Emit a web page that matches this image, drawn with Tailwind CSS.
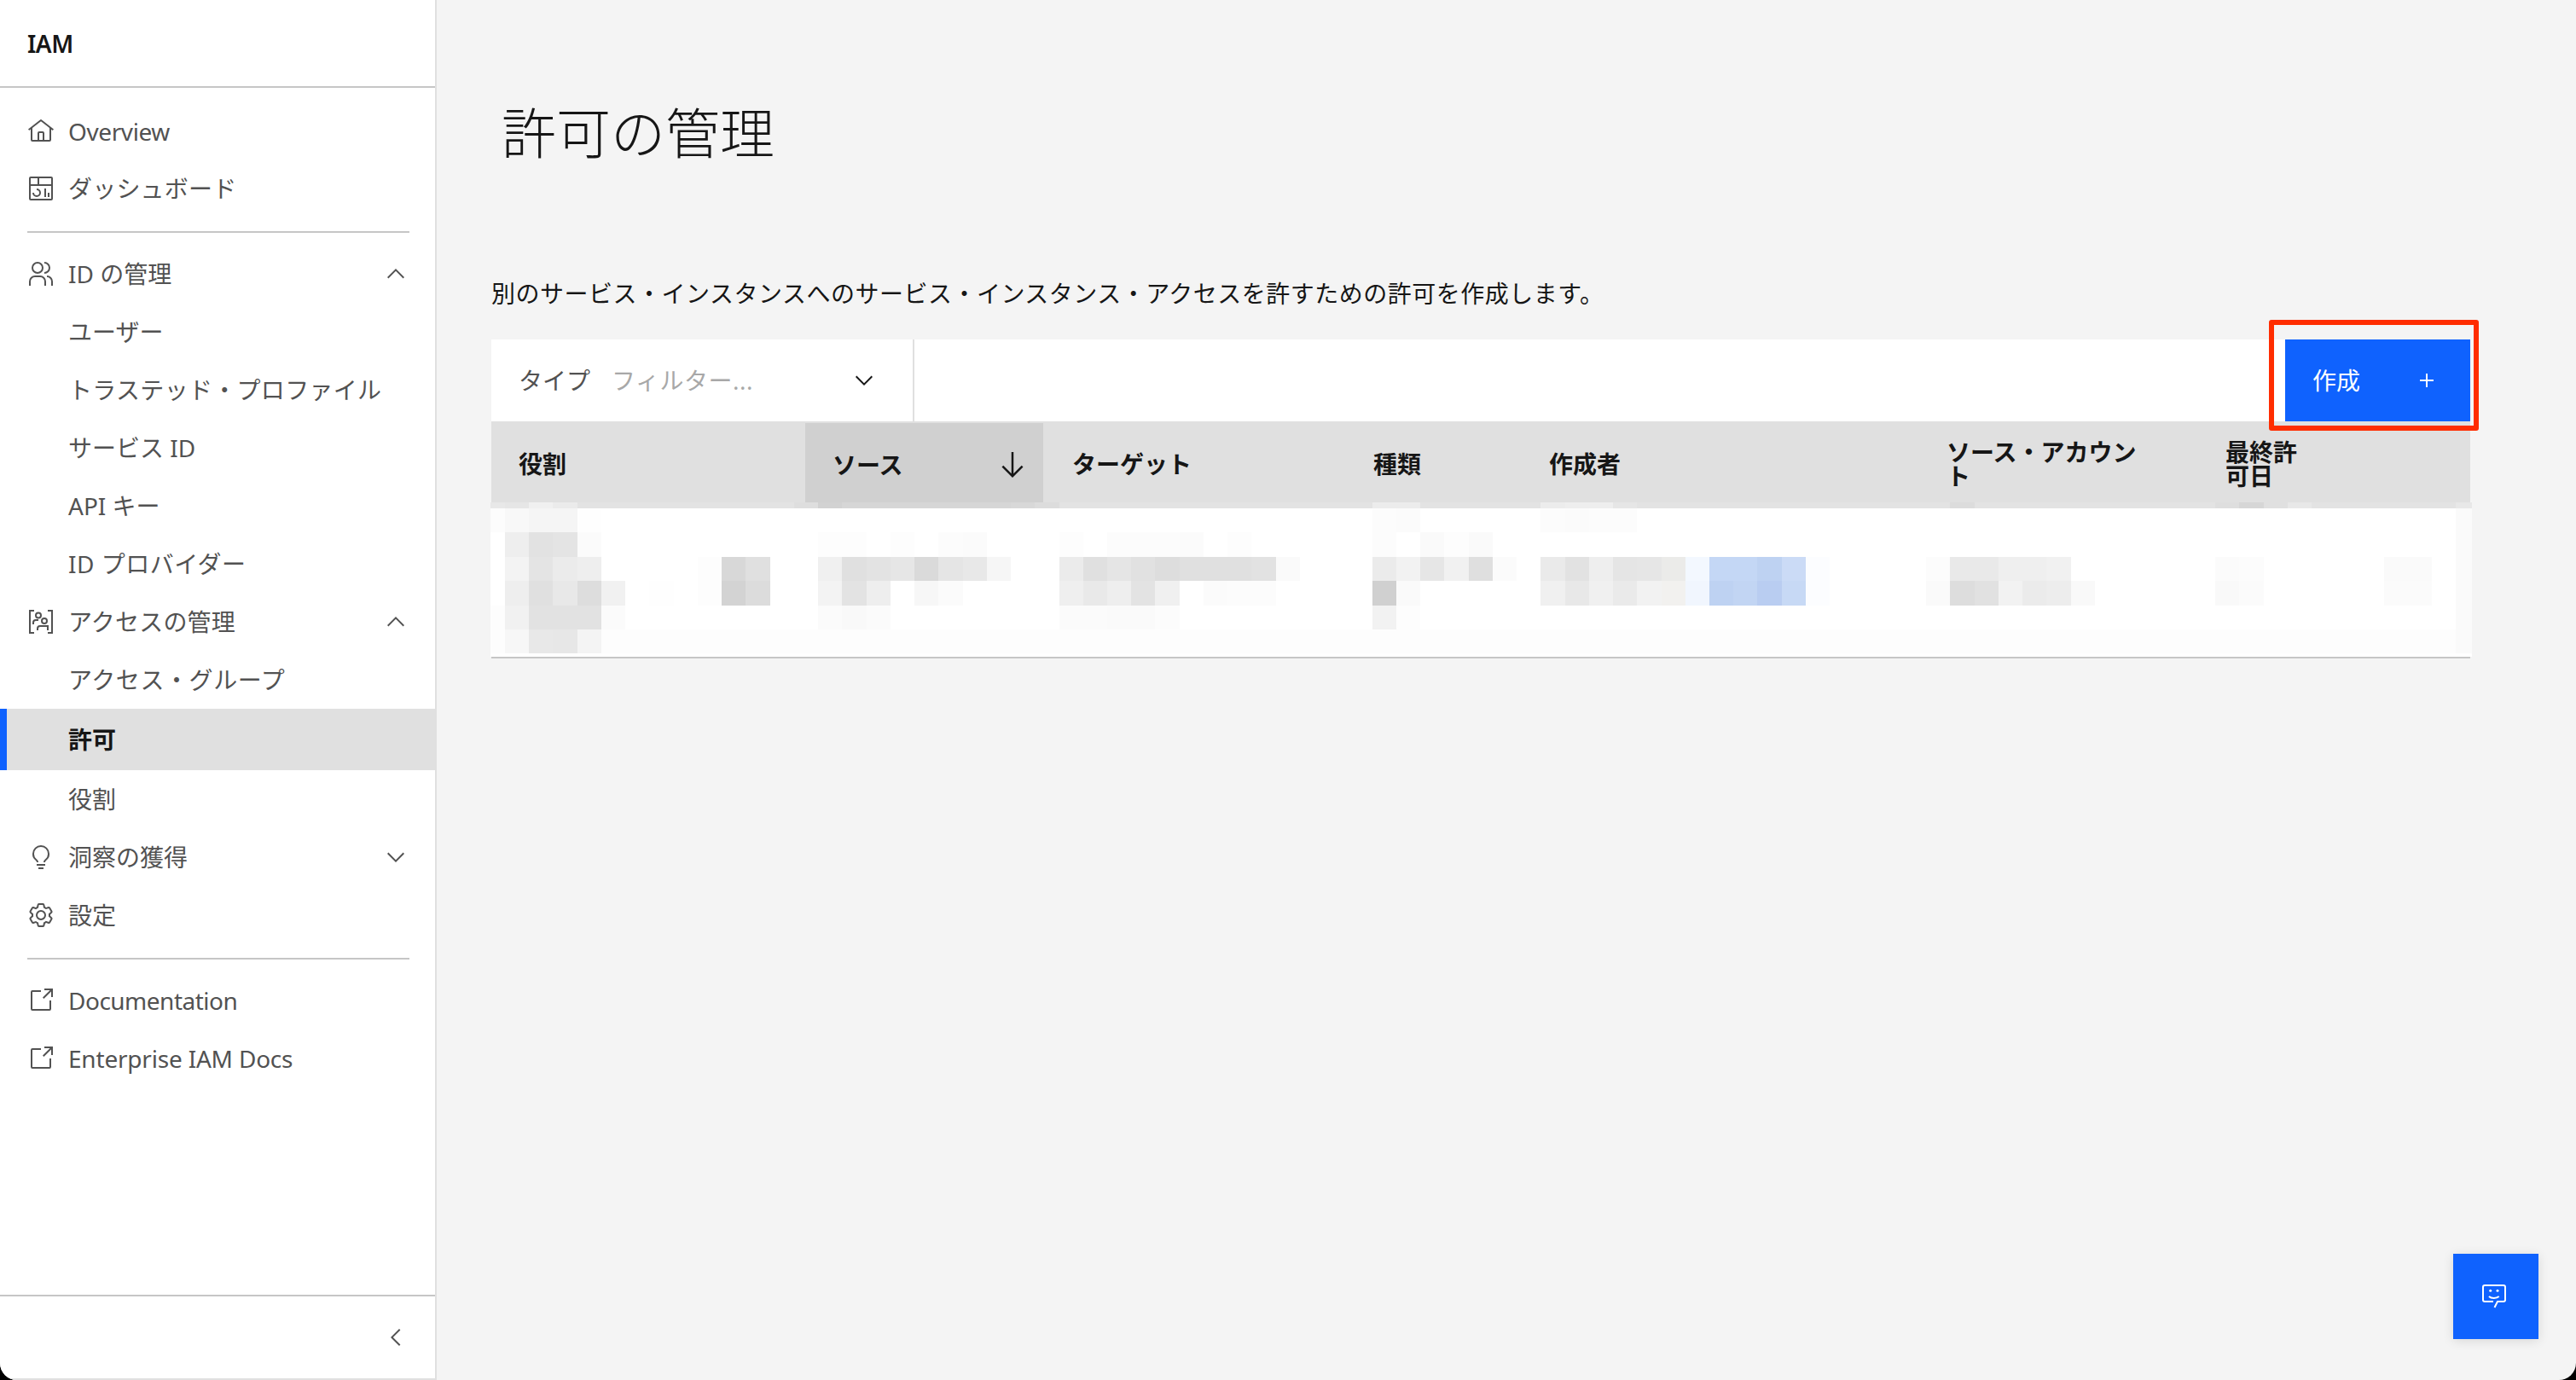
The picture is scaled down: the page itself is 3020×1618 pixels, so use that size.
<!DOCTYPE html>
<html lang="ja">
<head>
  <meta charset="UTF-8">
  <title>許可の管理 - IAM</title>
  <script src="https://cdn.jsdelivr.net/npm/@tailwindcss/browser@4"></script>
</head>
<body class="bg-black font-['Noto_Sans','Noto_Sans_CJK_JP',sans-serif] text-[28px] text-[#161616]">
  <div class="relative flex h-[1618px] w-[3020px] overflow-hidden rounded-b-[20px] bg-[#f4f4f4]">

    <!-- Sidebar -->
    <aside class="flex h-full w-[512px] shrink-0 flex-col border-r-2 border-b-2 border-[#e0e0e0] bg-white text-[#525252]">
      <div class="flex h-[103px] shrink-0 items-center border-b-2 border-[#c6c6c6] pl-[32px] font-semibold tracking-[-0.5px] text-[#161616]">IAM</div>
      <nav class="flex-1 pt-[17px]">
        <a class="flex h-[68px] items-center gap-[16px] pl-[32px] tracking-[-0.4px]">
          <svg class="size-[32px] fill-[#525252]" viewBox="0 0 32 32"><path d="M16.6123,2.2138a1.01,1.01,0,0,0-1.2427,0L1,13.4194l1.2427,1.5717L4,13.6209V26a2.0041,2.0041,0,0,0,2,2H26a2.0037,2.0037,0,0,0,2-2V13.63L29.7573,15,31,13.4282ZM18,26H14V18h4Zm2,0V18a2.0023,2.0023,0,0,0-2-2H14a2.002,2.002,0,0,0-2,2v8H6V12.0615l10-7.79,10,7.8005V26Z"/></svg>
          Overview
        </a>
        <a class="flex h-[66px] items-center gap-[16px] pl-[32px] tracking-[0.2px]">
          <svg class="size-[32px] fill-[#525252]" viewBox="0 0 32 32"><path d="M24 21h2v5h-2zM20 16h2v10h-2zM11 26a5.006 5.006 0 01-5-5H8a3 3 0 103-3V16a5 5 0 010 10z"/><path d="M28,2H4A2.002,2.002,0,0,0,2,4V28a2.0023,2.0023,0,0,0,2,2H28a2.0027,2.0027,0,0,0,2-2V4A2.0023,2.0023,0,0,0,28,2Zm0,9H14V4H28ZM12,4v7H4V4ZM4,28V13H28.0007l.0013,15Z"/></svg>
          ダッシュボード
        </a>
        <div class="mr-[30px] ml-[32px] mt-[17px] mb-[14px] h-[2px] bg-[#c6c6c6]"></div>
        <a class="flex h-[68px] items-center gap-[16px] pl-[32px] pr-[30px]">
          <svg class="size-[32px] fill-[#525252]" viewBox="0 0 32 32"><path d="M30,30H28V25a5.0057,5.0057,0,0,0-5-5V18a7.0078,7.0078,0,0,1,7,7Z"/><path d="M22,30H20V25a5.0059,5.0059,0,0,0-5-5H9a5.0059,5.0059,0,0,0-5,5v5H2V25a7.0082,7.0082,0,0,1,7-7h6a7.0082,7.0082,0,0,1,7,7Z"/><path d="M20,2V4a5,5,0,0,1,0,10v2A7,7,0,0,0,20,2Z"/><path d="M12,4A5,5,0,1,1,7,9a5,5,0,0,1,5-5m0-2a7,7,0,1,0,7,7A7,7,0,0,0,12,2Z"/></svg>
          <span class="flex-1">ID の管理</span>
          <svg class="size-[32px] fill-[#525252]" viewBox="0 0 32 32"><path d="M16 10L26 20 24.6 21.4 16 12.8 7.4 21.4 6 20z"/></svg>
        </a>
        <a class="flex h-[68px] items-center pl-[80px]">ユーザー</a>
        <a class="flex h-[68px] items-center pl-[80px] tracking-[0.3px]">トラステッド・プロファイル</a>
        <a class="flex h-[68px] items-center pl-[80px]">サービス ID</a>
        <a class="flex h-[68px] items-center pl-[80px]">API キー</a>
        <a class="flex h-[68px] items-center pl-[80px] tracking-[0.5px]">ID プロバイダー</a>
        <a class="flex h-[68px] items-center gap-[16px] pl-[32px] pr-[30px] tracking-[0.2px]">
          <svg class="size-[32px]" viewBox="0 0 32 32" fill="none" stroke="#525252" stroke-width="2"><path d="M8 3H3v26h5M24 3h5v26h-5"/><circle cx="13" cy="8.500" r="3"/><path d="M7 19v-2a3 3 0 013-3h3"/><circle cx="20" cy="15" r="3"/><path d="M12 26v-2a3 3 0 013-3h9v5"/></svg>
          <span class="flex-1">アクセスの管理</span>
          <svg class="size-[32px] fill-[#525252]" viewBox="0 0 32 32"><path d="M16 10L26 20 24.6 21.4 16 12.8 7.4 21.4 6 20z"/></svg>
        </a>
        <a class="flex h-[68px] items-center pl-[80px] tracking-[0.6px]">アクセス・グループ</a>
        <a class="flex h-[72px] items-center border-l-[8px] border-[#0f62fe] bg-[#e0e0e0] pl-[72px] font-semibold text-[#161616] -mr-[2px]">許可</a>
        <a class="flex h-[68px] items-center pl-[80px]">役割</a>
        <a class="flex h-[68px] items-center gap-[16px] pl-[32px] pr-[30px]">
          <svg class="size-[32px] fill-[#525252]" viewBox="0 0 32 32"><path d="M11 24H21V26H11zM13 28H19V30H13zM16 2A10 10 0 006 12a9.19 9.19 0 003.46 7.62c1 .93 1.54 1.46 1.54 2.38h2c0-1.84-1.11-2.87-2.19-3.86A7.2 7.2 0 018 12a8 8 0 0116 0 7.2 7.2 0 01-2.82 6.14c-1.07 1-2.18 2-2.18 3.86h2c0-.92.53-1.45 1.54-2.39A9.18 9.18 0 0026 12 10 10 0 0016 2z"/></svg>
          <span class="flex-1">洞察の獲得</span>
          <svg class="size-[32px] fill-[#525252]" viewBox="0 0 32 32"><path d="M16 22L6 12 7.4 10.6 16 19.2 24.6 10.6 26 12z"/></svg>
        </a>
        <a class="flex h-[68px] items-center gap-[16px] pl-[32px]">
          <svg class="size-[32px] fill-[#525252]" viewBox="0 0 32 32"><path d="M27,16.76c0-.25,0-.5,0-.76s0-.51,0-.77l1.92-1.68A2,2,0,0,0,29.3,11L26.94,7a2,2,0,0,0-1.73-1,2,2,0,0,0-.64.1l-2.43.82a11.35,11.35,0,0,0-1.31-.75l-.51-2.52a2,2,0,0,0-2-1.61H13.64a2,2,0,0,0-2,1.61l-.51,2.52a11.48,11.48,0,0,0-1.32.75L7.43,6.06A2,2,0,0,0,6.79,6,2,2,0,0,0,5.06,7L2.7,11a2,2,0,0,0,.41,2.51L5,15.24c0,.25,0,.5,0,.76s0,.51,0,.77L3.11,18.45A2,2,0,0,0,2.7,21L5.06,25a2,2,0,0,0,1.73,1,2,2,0,0,0,.64-.1l2.43-.82a11.35,11.35,0,0,0,1.31.75l.51,2.52a2,2,0,0,0,2,1.61h4.72a2,2,0,0,0,2-1.61l.51-2.52a11.48,11.48,0,0,0,1.32-.75l2.42.82a2,2,0,0,0,.64.1,2,2,0,0,0,1.73-1L29.3,21a2,2,0,0,0-.41-2.51ZM25.21,24l-3.43-1.16a8.86,8.86,0,0,1-2.71,1.57L18.36,28H13.64l-.71-3.55a9.36,9.36,0,0,1-2.7-1.57L6.79,24,4.43,20l2.72-2.4a8.9,8.9,0,0,1,0-3.13L4.43,12,6.79,8l3.43,1.16a8.86,8.86,0,0,1,2.71-1.57L13.64,4h4.72l.71,3.55a9.36,9.36,0,0,1,2.7,1.57L25.21,8,27.57,12l-2.72,2.4a8.9,8.9,0,0,1,0,3.13L27.57,20Z"/><path d="M16,22a6,6,0,1,1,6-6A5.94,5.94,0,0,1,16,22Zm0-10a3.91,3.91,0,0,0-4,4,3.91,3.91,0,0,0,4,4,3.91,3.91,0,0,0,4-4A3.91,3.91,0,0,0,16,12Z"/></svg>
          設定
        </a>
        <div class="mr-[30px] ml-[32px] mt-[16px] mb-[14px] h-[2px] bg-[#c6c6c6]"></div>
        <a class="flex h-[68px] items-center gap-[16px] pl-[32px] tracking-[-0.5px]">
          <svg class="size-[32px] fill-[#525252]" viewBox="0 0 32 32"><path d="M26,28H6a2.0027,2.0027,0,0,1-2-2V6A2.0027,2.0027,0,0,1,6,4H16V6H6V26H26V16h2V26A2.0027,2.0027,0,0,1,26,28Z"/><path d="M20 2 20 4 26.586 4 18 12.586 19.414 14 28 5.414 28 12 30 12 30 2 20 2z"/></svg>
          Documentation
        </a>
        <a class="flex h-[68px] items-center gap-[16px] pl-[32px] tracking-[-0.2px]">
          <svg class="size-[32px] fill-[#525252]" viewBox="0 0 32 32"><path d="M26,28H6a2.0027,2.0027,0,0,1-2-2V6A2.0027,2.0027,0,0,1,6,4H16V6H6V26H26V16h2V26A2.0027,2.0027,0,0,1,26,28Z"/><path d="M20 2 20 4 26.586 4 18 12.586 19.414 14 28 5.414 28 12 30 12 30 2 20 2z"/></svg>
          Enterprise IAM Docs
        </a>
      </nav>
      <div class="flex h-[98px] shrink-0 items-center justify-end border-t-2 border-[#c6c6c6] pr-[30px]">
        <svg class="size-[32px] fill-[#525252]" viewBox="0 0 32 32"><path d="M10 16L20 6 21.4 7.4 12.8 16 21.4 24.6 20 26z"/></svg>
      </div>
    </aside>

    <!-- Main -->
    <main class="w-[2320px] ml-[64px]">
      <h1 class="mt-[116px] ml-[12px] h-[80px] text-[64px] leading-[80px] font-light">許可の管理</h1>
      <p class="mt-[128px] h-[40px] leading-[40px] tracking-[0.5px]">別のサービス・インスタンスへのサービス・インスタンス・アクセスを許すための許可を作成します。</p>

      <div class="mt-[34px] flex h-[96px] justify-between bg-white">
        <div class="flex w-[496px] items-center border-r-2 border-[#e0e0e0] pl-[32px] pr-[41px]">
          <span class="w-[109px] text-[#525252]">タイプ</span>
          <span class="flex-1 tracking-[0.5px] text-[#a8a8a8]">フィルター...</span>
          <svg class="size-[32px] fill-[#161616]" viewBox="0 0 32 32"><path d="M16 22L6 12 7.4 10.6 16 19.2 24.6 10.6 26 12z"/></svg>
        </div>
        <button class="flex w-[217px] items-center justify-between bg-[#0f62fe] pl-[32px] pr-[35px] text-white">
          作成
          <svg class="size-[32px] fill-white" viewBox="0 0 32 32"><path d="M17 15L17 8 15 8 15 15 8 15 8 17 15 17 15 24 17 24 17 17 24 17 24 15 17 15z"/></svg>
        </button>
      </div>

      <div class="flex h-[95px] items-center bg-[#e0e0e0] pt-[4px] font-semibold leading-[28px]">
        <div class="w-[368px] pl-[32px]">役割</div>
        <div class="flex h-[93px] w-[279px] items-center justify-between self-end bg-[#d0d0d0] pt-[4px] pl-[32px] pr-[16px]">
          ソース
          <svg class="size-[40px] fill-[#161616]" viewBox="0 0 32 32"><path d="M24.59 16.59L17 24.17 17 4 15 4 15 24.17 7.41 16.59 6 18 16 28 26 18 24.59 16.59z"/></svg>
        </div>
        <div class="w-[355px] pl-[34px]">ターゲット</div>
        <div class="w-[208px] pl-[32px]">種類</div>
        <div class="w-[464px] pl-[30px]">作成者</div>
        <div class="w-[327px] pl-[32px]"><span class="block w-[230px] break-all">ソース・アカウント</span></div>
        <div class="w-[319px] pl-[32px]"><span class="block w-[90px]">最終許可日</span></div>
      </div>

      <svg id="mosaic" class="-ml-px block bg-white" width="2323" height="181" viewBox="0 0 2323 181" shape-rendering="crispEdges"></svg>
      <div class="h-[2px] bg-[#c6c6c6]"></div>
    </main>

    <!-- Red highlight round the create button -->
    <div class="absolute top-[375px] left-[2660px] h-[130px] w-[246px] rounded-[3px] border-[6px] border-[#ff2d00]"></div>

    <!-- Feedback button -->
    <button class="absolute top-[1470px] left-[2876px] flex size-[100px] items-center justify-center bg-[#0f62fe] shadow-[0_2px_12px_rgba(0,0,0,0.12)]">
      <svg class="size-[32px]" viewBox="0 0 32 32" fill="none" stroke="#fff" stroke-width="2"><path d="M13 22H3a2 2 0 01-2-2V5a2 2 0 012-2h22a2 2 0 012 2v15a2 2 0 01-2 2h-7l-3.500 7"/><circle cx="9.700" cy="9.300" r="1.500" fill="#fff" stroke="none"/><circle cx="18" cy="9.300" r="1.500" fill="#fff" stroke="none"/><path d="M8 16c2.500 2.500 9 2.500 11.700 0"/></svg>
    </button>
  </div>

  <script>
    // redacted table row: blurred blocks on a 28.24px grid, [y, h, {column: grey or colour}]
    var rows = [
      [0, 7, {'-1':'e8e8e8',0:'e6e6e6',1:'f0f0f0',2:'ebebeb',12:'dedede',13:'d2d2d2',14:'d6d6d6',15:'d6d6d6',16:'d6d6d6',17:'d6d6d6',18:'d6d6d6',19:'d6d6d6',20:'d6d6d6',21:'d8d8d8',22:'dcdcdc',36:'ececec',37:'ececec',43:'ececec',44:'eeeeee',45:'eeeeee',46:'e6e6e6',60:'dcdcdc',71:'dedede',72:'d6d6d6',73:'e0e0e0',74:'e8e8e8'}],
      [7, 28, {'-1':'fcfcfc',0:'f8f8f8',1:'f5f5f5',2:'f5f5f5',3:'fefefe',36:'fcfcfc',37:'fbfbfb',43:'fcfcfc',44:'fbfbfb',45:'fcfcfc',46:'fcfcfc'}],
      [35, 29, {0:'eeeeee',1:'e2e2e2',2:'e4e4e4',3:'fbfbfb',13:'fdfdfd',14:'fdfdfd',16:'fdfdfd',18:'fcfcfc',19:'fbfbfb',23:'fdfdfd',25:'fcfcfc',26:'fcfcfc',27:'fcfcfc',28:'fbfbfb',30:'fdfdfd',36:'fcfcfc',38:'fafafa',39:'fdfdfd',40:'fafafa'}],
      [64, 28, {0:'f3f3f3',1:'e4e4e4',2:'ebebeb',3:'eeeeee',8:'fdfdfd',9:'d8d8d8',10:'e0e0e0',13:'f0f0f0',14:'e0e0e0',15:'e3e3e3',16:'e6e6e6',17:'dadada',18:'e5e5e5',19:'e8e8e8',20:'f6f6f6',23:'ebebeb',24:'e0e0e0',25:'e5e5e5',26:'e1e1e1',27:'dddddd',28:'e0e0e0',29:'e0e0e0',30:'e0e0e0',31:'e2e2e2',32:'fafafa',36:'ebebeb',37:'f2f2f2',38:'e6e6e6',39:'f1f1f1',40:'dfdfdf',41:'fbfbfb',43:'eaeaea',44:'e2e2e2',45:'eeeeee',46:'e5e5e5',47:'e6e6e6',48:'ebebe9',49:'f3f8ff',50:'c4d7f5',51:'c4d7f5',52:'bed2f2',53:'cbdbf6',54:'fcfdff',59:'fcfcfc',60:'e9e9e9',61:'e9e9e9',62:'efefef',63:'efefef',64:'f1f1f1',71:'fbfbfb',72:'fcfcfc',78:'fafafa',79:'fafafa'}],
      [92, 29, {0:'eeeeee',1:'e0e0e0',2:'e8e8e8',3:'dddddd',4:'f1f1f1',6:'fefefe',8:'fdfdfd',9:'d3d3d3',10:'dcdcdc',13:'f3f3f3',14:'e3e3e3',15:'eeeeee',17:'f7f7f7',18:'fbfbfb',23:'efefef',24:'e9e9e9',25:'eeeeee',26:'e3e3e3',27:'f0f0f0',29:'fbfbfb',30:'fcfcfc',31:'fcfcfc',36:'d0d0d0',37:'fafafa',43:'f0f0f0',44:'e8e8e8',45:'f0f0f0',46:'eaeaea',47:'f2f2f2',48:'f2f1ef',49:'f1f6fe',50:'bed2f2',51:'c2d5f3',52:'b9cdf1',53:'c7d9f5',54:'fcfdff',59:'fafafa',60:'dddddd',61:'e1e1e1',62:'f2f2f2',63:'ebebeb',64:'ededed',65:'f9f9f9',71:'f9f9f9',72:'fbfbfb',78:'fbfbfb',79:'fbfbfb'}],
      [121, 28, {'-1':'fdfdfd',0:'f1f1f1',1:'e2e2e2',2:'e2e2e2',3:'e2e2e2',4:'fbfbfb',13:'fbfbfb',14:'f9f9f9',15:'fbfbfb',23:'fbfbfb',24:'fbfbfb',25:'fafafa',26:'fafafa',27:'fcfcfc',36:'f2f2f2',37:'fdfdfd'}],
      [149, 28, {'-1':'fdfdfd',0:'f7f7f7',1:'e8e8e8',2:'e7e7e7',3:'f4f4f4'}]
    ];
    var svg = document.getElementById('mosaic');
    function block(x, y, w, h, fill) {
      var r = document.createElementNS('http://www.w3.org/2000/svg', 'rect');
      r.setAttribute('x', x); r.setAttribute('y', y);
      r.setAttribute('width', w); r.setAttribute('height', h);
      r.setAttribute('fill', '#' + fill);
      svg.appendChild(r);
    }
    block(0, 0, 2323, 7, 'e3e3e3');
    block(0, 149, 2323, 28, 'fdfdfd');
    block(2304, 7, 19, 170, 'fafafa');
    block(2304, 0, 19, 7, 'e8e8e8');
    rows.forEach(function (row) {
      Object.keys(row[2]).forEach(function (c) {
        var n = Number(c);
        var x = n < 0 ? 0 : Math.round(17 + 28.24 * n);
        var next = Math.round(17 + 28.24 * (n + 1));
        block(x, row[0], next - x, row[1], row[2][c]);
      });
    });
  </script>
</body>
</html>
